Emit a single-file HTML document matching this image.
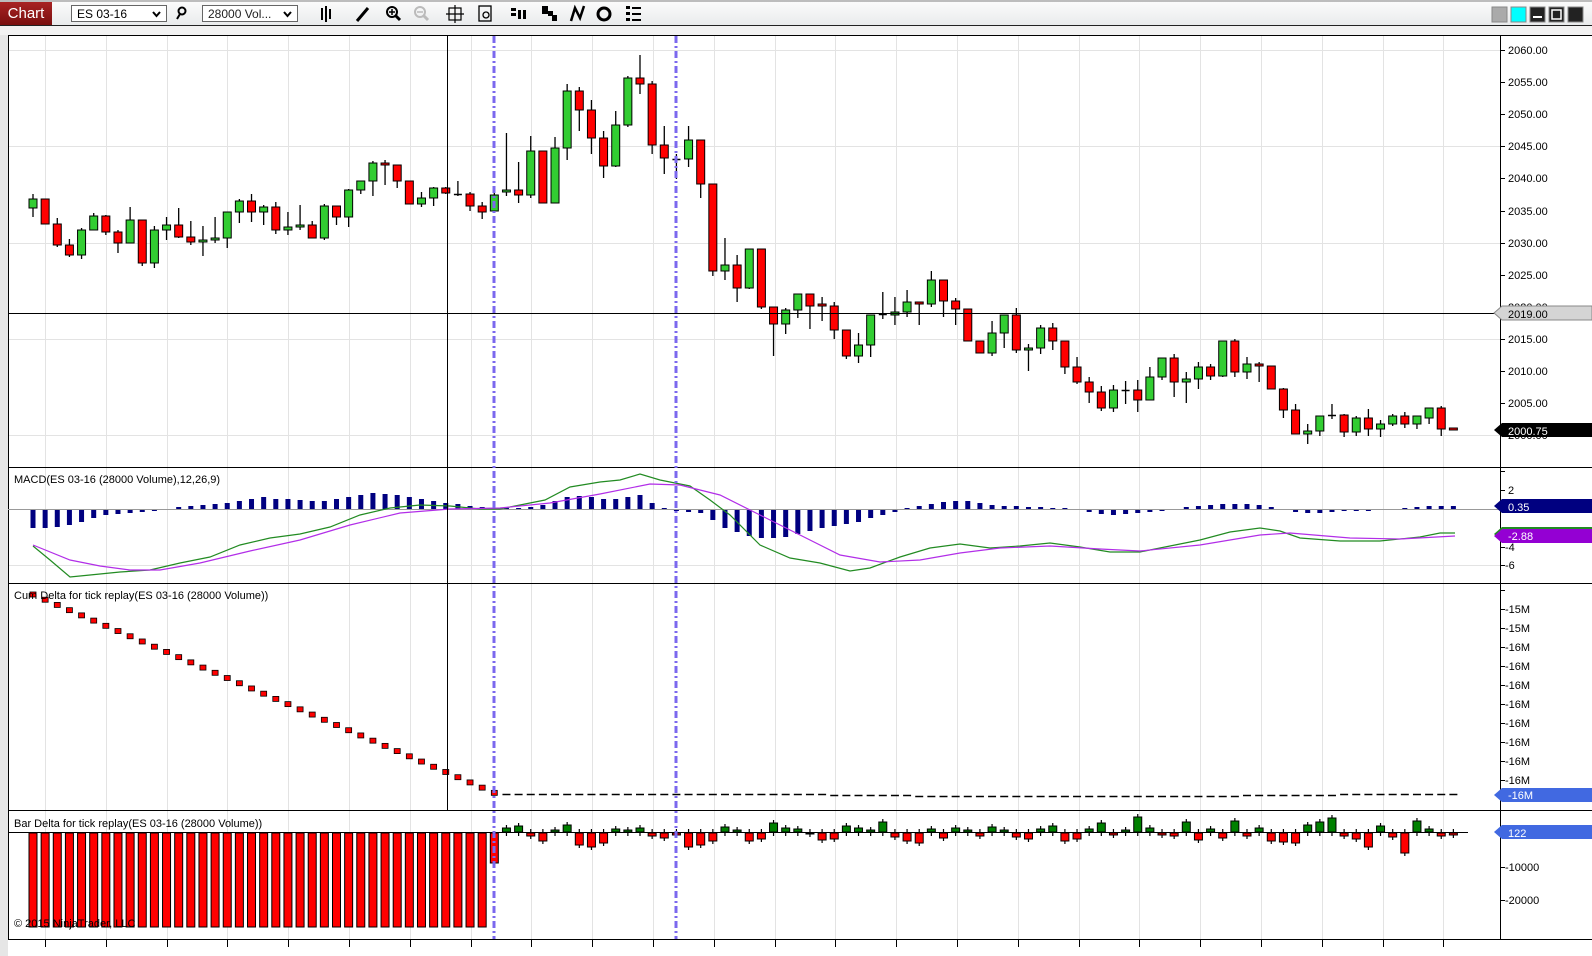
<!DOCTYPE html>
<html><head><meta charset="utf-8">
<style>
html,body{margin:0;padding:0;width:1592px;height:956px;overflow:hidden;background:#fff;font-family:"Liberation Sans",sans-serif;}
#tb{position:absolute;left:0;top:0;width:1592px;height:26px;background:linear-gradient(#fbfbfb,#e9ebec);border-top:2px solid #bdbdbd;border-bottom:1px solid #222;box-sizing:border-box;}
.tab{position:absolute;left:0;top:0;width:52px;height:23px;background:linear-gradient(#a82323,#7a0f0f);color:#fff;font-size:15px;line-height:23px;text-align:center;}
.dd{position:absolute;top:3px;height:17px;border:1px solid #666;background:#fff;font-size:12px;line-height:17px;padding-left:5px;box-sizing:border-box;}
.dd svg{position:absolute;right:5px;top:5px;left:auto;}
svg{position:absolute;left:0;top:0;}
</style></head><body>
<div id="tb">
<div class="tab">Chart</div>
<div class="dd" style="left:71px;width:96px;">ES 03-16<svg width="9" height="7" viewBox="0 0 9 7"><path d="M1 1 L4.5 5 L8 1" stroke="#000" stroke-width="2" fill="none"/></svg></div>
<div class="dd" style="left:202px;width:96px;color:#222">28000 Vol...<svg width="9" height="7" viewBox="0 0 9 7"><path d="M1 1 L4.5 5 L8 1" stroke="#000" stroke-width="2" fill="none"/></svg></div>
</div>
<svg width="1592" height="956" viewBox="0 0 1592 956" id="s" style="top:0">
<g stroke="#000" fill="none" stroke-width="2">
<circle cx="182" cy="11" r="3.5"/><line x1="180" y1="14" x2="177" y2="19"/>
<line x1="322" y1="8" x2="322" y2="20"/><line x1="326" y1="6" x2="326" y2="22"/><line x1="330" y1="9" x2="330" y2="19"/>
<line x1="357" y1="21" x2="368" y2="8" stroke-width="3"/>
<circle cx="392" cy="12" r="5"/><line x1="396" y1="16" x2="400" y2="20" stroke-width="3"/><line x1="389" y1="12" x2="395" y2="12" stroke-width="1.5"/><line x1="392" y1="9" x2="392" y2="15" stroke-width="1.5"/>
<g stroke="#bbb"><circle cx="420" cy="12" r="5"/><line x1="424" y1="16" x2="428" y2="20" stroke-width="3"/><line x1="417" y1="12" x2="423" y2="12" stroke-width="1.5"/></g>
<g stroke-width="1.2"><rect x="449" y="8" width="12" height="12"/><line x1="455" y1="5" x2="455" y2="23"/><line x1="446" y1="14" x2="464" y2="14"/></g>
<rect x="479" y="6" width="12" height="15" stroke-width="1.3"/><circle cx="486" cy="15" r="3" stroke-width="1.3"/>
</g>
<g fill="#000">
<rect x="511" y="8" width="5" height="3"/><rect x="511" y="13" width="5" height="3"/><rect x="518" y="10" width="3" height="9"/><rect x="523" y="10" width="3" height="9"/>
<rect x="542" y="6" width="6" height="8"/><rect x="548" y="11" width="5" height="5"/><rect x="552" y="15" width="5" height="6"/>
<rect x="626" y="6" width="4" height="3"/><rect x="626" y="12" width="4" height="3"/><rect x="626" y="18" width="4" height="3"/><rect x="632" y="7" width="9" height="2"/><rect x="632" y="13" width="9" height="2"/><rect x="632" y="19" width="9" height="2"/>
</g>
<path d="M571 21 L575 8 L580 18 L584 6" stroke="#000" stroke-width="2.5" fill="none"/>
<circle cx="604" cy="14" r="6" stroke="#000" stroke-width="3" fill="none"/>
<rect x="1492" y="7" width="15" height="15" fill="#aaa" stroke="#888"/>
<rect x="1511" y="7" width="15" height="15" fill="#0ff" stroke="#888"/>
<rect x="1530" y="7" width="15" height="15" fill="#222" stroke="#888"/><rect x="1533" y="16" width="9" height="2" fill="#fff"/>
<rect x="1549" y="7" width="15" height="15" fill="#222" stroke="#888"/><rect x="1552" y="10" width="9" height="9" fill="none" stroke="#fff" stroke-width="1.5"/>
<rect x="1568" y="7" width="15" height="15" fill="#222" stroke="#888"/>
<rect x="0" y="26" width="1592" height="930" fill="#fff"/>
<rect x="0" y="26" width="8" height="930" fill="#e6e6e6"/>
<rect x="0" y="26" width="1592" height="9" fill="#f2f2f2"/>
<line x1="8" y1="35.5" x2="1592" y2="35.5" stroke="#000"/>
<line x1="8.5" y1="35" x2="8.5" y2="940" stroke="#000"/>
<g id="grid" stroke="#e3e3e3" stroke-width="1"></g>
<line x1="8" y1="467.5" x2="1592" y2="467.5" stroke="#000"/>
<line x1="8" y1="583.5" x2="1592" y2="583.5" stroke="#000"/>
<line x1="8" y1="810.5" x2="1592" y2="810.5" stroke="#000"/>
<line x1="8" y1="939.5" x2="1592" y2="939.5" stroke="#000"/>
<line x1="1500.5" y1="35" x2="1500.5" y2="940" stroke="#000"/>
<line x1="8" y1="509.5" x2="1500" y2="509.5" stroke="#999"/>
<line x1="8" y1="832.5" x2="1468" y2="832.5" stroke="#000"/>
<g id="plot"></g>
<g stroke="#7b68ee" stroke-width="3" stroke-dasharray="7,3,2,3">
<line x1="494" y1="36" x2="494" y2="939"/><line x1="676" y1="36" x2="676" y2="939"/></g>
<line x1="447.5" y1="36" x2="447.5" y2="810" stroke="#000"/>
<line x1="8" y1="313.5" x2="1500" y2="313.5" stroke="#000"/>
<g font-size="11" fill="#000" font-family="Liberation Sans,sans-serif" id="lab">
<text x="1508" y="54">2060.00</text><text x="1508" y="86">2055.00</text><text x="1508" y="118">2050.00</text><text x="1508" y="150">2045.00</text><text x="1508" y="182">2040.00</text><text x="1508" y="215">2035.00</text><text x="1508" y="247">2030.00</text><text x="1508" y="279">2025.00</text><text x="1508" y="311">2020.00</text><text x="1508" y="343">2015.00</text><text x="1508" y="375">2010.00</text><text x="1508" y="407">2005.00</text><text x="1508" y="439">2000.00</text>
<text x="1508" y="494">2</text><text x="1505" y="551">-4</text><text x="1505" y="569">-6</text>
<text x="1505" y="613">-15M</text><text x="1505" y="632">-15M</text><text x="1505" y="651">-16M</text><text x="1505" y="670">-16M</text><text x="1505" y="689">-16M</text><text x="1505" y="708">-16M</text><text x="1505" y="727">-16M</text><text x="1505" y="746">-16M</text><text x="1505" y="765">-16M</text><text x="1505" y="784">-16M</text>
<text x="1505" y="871">-10000</text><text x="1505" y="904">-20000</text>
<text x="14" y="483">MACD(ES 03-16 (28000 Volume),12,26,9)</text>
<text x="14" y="599">Cum Delta for tick replay(ES 03-16 (28000 Volume))</text>
<text x="14" y="827">Bar Delta for tick replay(ES 03-16 (28000 Volume))</text>
<text x="14" y="927">© 2015 NinjaTrader, LLC</text>
</g>
<g id="ticks" stroke="#000"></g>
<path d="M1494 313 L1502 306 H1592 V320 H1502 Z" fill="#d4d4d4" stroke="#888"/>
<text x="1508" y="318" font-size="11">2019.00</text>
<path d="M1494 430 L1502 423 H1592 V437 H1502 Z" fill="#000"/>
<text x="1508" y="435" font-size="11" fill="#fff">2000.75</text>
<path d="M1494 506 L1502 499 H1592 V513 H1502 Z" fill="#000080"/>
<text x="1508" y="511" font-size="11" fill="#fff">0.35</text>
<path d="M1494 534 L1502 527 H1592 V541 H1502 Z" fill="#228b22"/>
<path d="M1494 536 L1502 529 H1592 V543 H1502 Z" fill="#9400d3"/>
<text x="1508" y="540" font-size="11" fill="#fff">-2.88</text>
<path d="M1494 795 L1502 788 H1592 V802 H1502 Z" fill="#4169e1"/>
<text x="1508" y="799" font-size="11" fill="#fff">-16M</text>
<path d="M1494 832 L1502 825 H1592 V839 H1502 Z" fill="#4169e1"/>
<text x="1508" y="837" font-size="11" fill="#fff">122</text>
</svg>
<script>
var NS="http://www.w3.org/2000/svg";
function el(p,t,a){var e=document.createElementNS(NS,t);for(var k in a)e.setAttribute(k,a[k]);p.appendChild(e);return e;}
var g=document.getElementById("plot"),gr=document.getElementById("grid"),tk=document.getElementById("ticks");
for(var gx=45;gx<1500;gx+=60.8){var xx=Math.round(gx)+.5;el(gr,"line",{x1:xx,y1:36,x2:xx,y2:939});el(tk,"line",{x1:xx,y1:940,x2:xx,y2:947});}
[50,146,243,339,435,565].forEach(function(y){el(gr,"line",{x1:9,y1:y+.5,x2:1500,y2:y+.5});});
[50,82,114,146,178,211,243,275,307,339,371,403,435,471,490,528,547,565,590,609,628,647,666,685,704,723,742,761,780,867,900].forEach(function(y){el(tk,"line",{x1:1500,y1:y+.5,x2:1505,y2:y+.5});});
var X=function(i){return 33+(i-1)*12.14;};
var C="G 203 212 198 221|R 203 228 203 228|R 228 249 222 251|R 249 259 243 261|G 234 259 232 263|G 220 234 217 234|R 220 236 219 239|R 236 247 234 257|G 224 247 211 247|R 224 267 224 270|G 234 267 230 272|G 229 234 221 244|R 229 241 212 242|R 241 246 225 249|G 244 246 230 260|G 242 244 221 247|G 216 242 216 252|G 205 216 203 227|R 205 216 198 226|G 211 216 209 229|R 211 234 206 238|G 231 234 216 239|G 229 231 209 234|R 229 242 225 242|G 210 242 208 244|R 210 221 210 229|G 194 221 193 231|G 185 194 185 198|G 167 185 165 200|R 167 169 164 189|R 169 185 169 192|R 185 208 185 208|G 202 208 196 211|G 192 202 191 210|R 192 197 191 198|D 198 198 185 200|R 198 210 196 215|R 210 216 206 223".split("|").map(function(s){var a=s.split(" ");return [a[0],+a[1]-4,+a[2]-4,+a[3]-4,+a[4]-4];});
var C2="G 195 211 193 211|G 190 192 133 196|R 190 195 162 203|G 151 195 136 198|R 151 203 151 203|G 148 203 137 203|G 91 148 84 160|R 91 110 87 131|R 110 138 100 154|R 138 166 131 178|G 125 166 111 167|G 78 125 76 127|R 78 84 55 94|R 84 145 81 154|R 145 158 126 174|D 159 159 154 179|G 140 159 126 167|R 140 184 140 198|R 184 271 184 276|G 265 271 238 280|R 265 288 255 302|G 249 288 249 289|R 249 307 249 309|R 307 324 307 356|G 310 324 308 334|G 294 310 294 318|R 294 306 294 329|R 304 306 297 321|R 306 330 302 339|R 330 356 330 359|G 345 356 333 363|G 315 345 315 357|D 314 314 292 319|G 312 315 297 325|G 302 312 290 317|R 302 304 302 325|G 280 304 271 307|R 280 301 280 317|R 301 309 298 325|R 309 341 309 341|R 341 353 341 353|G 333 353 321 356|G 315 333 315 348|R 315 350 308 353|G 348 350 344 371|G 328 348 325 354|R 328 341 323 350|R 341 367 341 374|R 367 382 357 384|R 382 392 377 403|R 392 408 386 411|G 390 408 385 412|D 390 390 381 404|R 390 400 380 412|G 377 400 367 400|G 358 377 358 380|R 358 382 354 397|G 379 382 372 403|G 367 379 362 389|R 367 376 364 380|G 341 376 341 377|R 341 372 339 377|G 364 372 357 379|R 364 366 362 382|R 366 389 366 389|R 389 410 388 418|R 410 434 404 434|G 431 434 424 444|G 416 431 416 436|D 415 415 404 419|R 415 432 414 437|G 418 432 416 436|R 418 429 409 436|G 424 429 420 437|G 416 424 414 426|R 416 424 412 428|G 416 424 416 429|G 408 418 408 424|R 408 429 406 436|R 428 430 428 430".split("|").map(function(s){var a=s.split(" ");return [a[0],+a[1],+a[2],+a[3],+a[4]];});
var all=C.concat(C2);
all.forEach(function(c,k){var x=X(k+1);
 el(g,"line",{x1:x,y1:c[3],x2:x,y2:c[4],stroke:"#000","stroke-width":1.3});
 if(c[0]=="D"){el(g,"line",{x1:x-4,y1:c[1]+.5,x2:x+4,y2:c[1]+.5,stroke:"#000","stroke-width":1.5});}
 else{var h=Math.max(c[2]-c[1],2);el(g,"rect",{x:x-4,y:c[1],width:8,height:h,fill:c[0]=="G"?"#32cd32":"#ff0000",stroke:"#000","stroke-width":1});}
});
var H=[-18,-18,-17,-15,-12,-8,-5,-4,-3,-2,-1,0,2,3,4,5,6,8,10,12,10,10,9,8,8,10,12,14,16,15,14,12,10,8,6,5,3,2,0,1,1,2,4,8,12,13,12,10,10,12,14,6,1,-1,-2,-3,-10,-18,-22,-26,-28,-28,-27,-24,-21,-18,-16,-14,-12,-8,-5,-2,1,3,5,7,8,8,6,4,3,3,2,2,1,1,0,-2,-4,-5,-4,-3,-2,-1,0,2,3,4,5,5,5,4,2,0,-2,-3,-3,-2,-1,-1,-1,0,0,1,2,3,3,3];
H.forEach(function(v,k){var x=X(k+1);if(v==0)return;el(g,"rect",{x:x-2.5,y:v>0?509-v:510,width:5,height:Math.abs(v),fill:"#000080"});});
function pl(pts,col){el(g,"polyline",{points:pts,fill:"none",stroke:col,"stroke-width":1.2});}
pl("33,546 50,560 70,577 90,575 120,572 150,570 180,563 210,557 240,545 270,538 300,534 330,527 360,515 390,508 420,505 450,506 480,509 500,509 520,505 545,500 570,487 600,482 620,480 640,474 660,480 690,486 710,500 730,515 760,545 790,558 820,563 850,571 870,568 900,557 930,548 960,544 990,548 1020,546 1050,543 1080,547 1110,552 1140,552 1170,546 1200,540 1230,532 1260,528 1280,531 1300,538 1340,541 1380,541 1420,537 1440,533 1455,533","#228b22");
pl("33,545 70,560 100,566 130,570 160,570 200,563 250,551 300,540 350,525 400,513 450,509 500,508 550,503 600,494 650,484 680,485 720,495 760,515 800,535 840,555 880,562 920,560 960,553 1000,548 1050,546 1100,549 1140,551 1200,545 1260,535 1290,533 1350,538 1400,539 1455,536","#b22ee8");
for(var i=1;i<=39;i++){var x=X(i),y=594+(i-1)*5.22;el(g,"rect",{x:x-3,y:y-2,width:6,height:5,fill:"#ff0000",stroke:"#000","stroke-width":.8});}
for(var i=40;i<=118;i++){var x=X(i),y=794+Math.round(Math.sin(i*0.09)*1.5+1);el(g,"line",{x1:x-4,y1:y+.5,x2:x+4,y2:y+.5,stroke:"#000","stroke-width":1.5});}
for(var i=1;i<=39;i++){var x=X(i);var b=i==39?863:927;el(g,"rect",{x:x-4,y:833,width:8,height:b-833,fill:"#ff0000",stroke:"#000","stroke-width":1});}
var D=[4,6,-3,-8,2,7,-12,-14,-10,3,2,4,-3,-5,-2,-14,-12,-8,5,2,-8,-6,9,4,3,-1,-7,-6,6,4,2,10,-4,-8,-10,3,-5,4,2,-3,5,2,-4,-6,3,6,-8,-6,3,9,-2,2,15,4,-2,-3,10,-7,3,-5,11,-3,4,-8,-9,-10,7,10,14,-3,-6,-14,6,-4,-20,11,3,-3,-2];
D.forEach(function(v,k){var x=X(k+40);el(g,"line",{x1:x,y1:832-Math.max(v,0)-3,x2:x,y2:832+Math.max(-v,0)+4,stroke:"#000","stroke-width":1.2});
 el(g,"rect",{x:x-4,y:v>0?832-v:833,width:8,height:Math.abs(v)||1,fill:v>0?"#008000":"#ff0000",stroke:"#000","stroke-width":1});});
</script>
</body></html>
